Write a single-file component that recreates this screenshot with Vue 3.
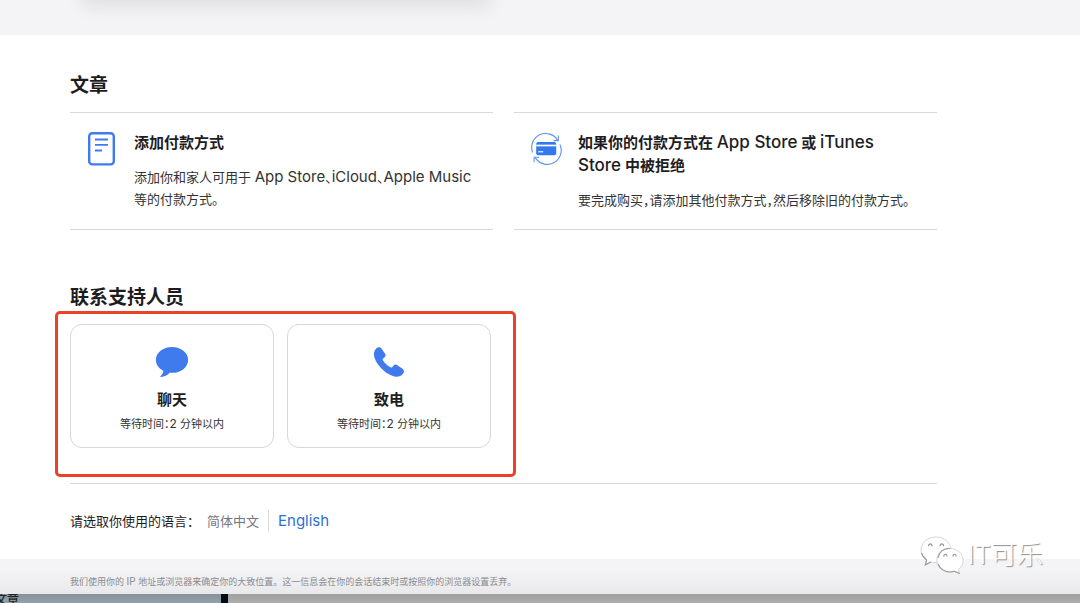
<script setup>
const contacts = [
  { id: 'chat', title: '聊天', wait: '等待时间：', count: '2', rest: ' 分钟以内' },
  { id: 'call', title: '致电', wait: '等待时间：', count: '2', rest: ' 分钟以内' }
]
</script>

<template>
  <div class="page">
    <header class="hero"><div class="hero-card"></div></header>

    <main class="main">
      <section>
        <h2 class="section-title">文章</h2>
        <div class="articles">
          <article class="article">
            <svg class="article-icon" viewBox="0 0 34 36" fill="none" stroke="#407bee" aria-hidden="true">
              <rect x="4.200" y="2.200" width="24.600" height="31.200" rx="3.200" stroke-width="2.400" />
              <path d="M10 8.500h13M10 13.900h13M10 19.500h7" stroke-width="1.800" />
            </svg>
            <div>
              <h3 class="article-title">添加付款方式</h3>
              <p class="article-text">添加你和家人可用于 <span class="latin">App Store</span>、<span class="latin">iCloud</span>、<span class="latin">Apple Music</span> 等的付款方式。</p>
            </div>
          </article>
          <article class="article">
            <svg class="article-icon" viewBox="0 0 34 36" fill="none" stroke="#5c94f1" stroke-width="1.100" aria-hidden="true">
              <path d="M3.600 21.500A14 14 0 0 1 28.800 9.500M30.900 13.500A14 14 0 0 1 6.200 26.600" />
              <path d="M29.300 4.600v5h-5M5.100 31.200v-5h5" />
              <rect x="7.200" y="11" width="20" height="13.200" rx="2" fill="#3478f0" stroke="none" />
              <path d="M7.200 14.500h20" stroke="#fff" stroke-width="1.700" />
              <path d="M9.200 20.800h5" stroke="#fff" stroke-width="1.100" />
            </svg>
            <div>
              <h3 class="article-title">如果你的付款方式在 <span class="latin">App Store</span> 或 <span class="latin">iTunes Store</span> 中被拒绝</h3>
              <p class="article-text">要完成购买，请添加其他付款方式，然后移除旧的付款方式。</p>
            </div>
          </article>
        </div>
      </section>

      <section class="support">
        <h2 class="section-title">联系支持人员</h2>
        <div class="contacts">
          <button v-for="c in contacts" :key="c.id" class="contact" type="button">
            <svg v-if="c.id === 'chat'" class="contact-icon" viewBox="0 0 34 32" fill="#407bee" aria-hidden="true">
              <path d="M17 1C8 1 .9 6.700.9 13.900c0 4.500 2.900 8.500 7.400 10.800.1 2.100-1.200 4-2.700 5.200-.5.500-.2 1 .4 1 3.300-.1 6.600-1.800 8.600-4.200.8.100 1.600.1 2.400.1 9 0 16.100-5.700 16.100-12.900S26 1 17 1z" />
            </svg>
            <svg v-else class="contact-icon" viewBox="0 0 34 32" fill="#407bee" aria-hidden="true">
              <path d="M4.200 2.400C5.700.8 8.200.6 9.500 2.500l3.600 5.300c.9 1.500.5 2.600-.8 3.700l-1.200 1c-.5.500-.6 1-.2 1.700 1.900 3 4.500 5.400 7.600 7 .7.400 1.300.3 1.800-.3l1-1.200c1-1.200 2.300-1.500 3.700-.6l5.600 3.600c1.900 1.300 1.700 3.700.2 5.300-2.500 2.900-6.300 3.400-10.700 1.700C12 26.800 5 19 2.500 11.800 1.400 8 1.700 4.700 4.200 2.400z" />
            </svg>
            <span class="contact-title">{{ c.title }}</span>
            <span class="contact-wait">{{ c.wait }}<span class="latin">{{ c.count }}</span>{{ c.rest }}</span>
          </button>
          <div class="highlight"></div>
        </div>
      </section>

      <nav class="languages" aria-label="语言">
        <span class="language-label">请选取你使用的语言：</span>
        <span class="language-current">简体中文</span>
        <a class="language-link" href="#" lang="en">English</a>
      </nav>
    </main>

    <footer class="footer">我们使用你的 <span class="latin">IP</span> 地址或浏览器来确定你的大致位置。这一信息会在你的会话结束时或按照你的浏览器设置丢弃。</footer>

    <div class="backdrop">
      <div class="backdrop-window">文章</div>
      <div class="backdrop-rest"></div>
    </div>

    <div class="watermark">
      <svg class="watermark-icon" viewBox="0 0 44 38" aria-hidden="true">
        <g fill="#fff" stroke="#c4c4c4" stroke-width="0.700">
          <path d="M16 1C7.700 1 1 6.700 1 14c0 4.200 2.200 7.700 5.600 10l-1.300 5 5.500-3c1.600.5 3.300.7 5.200.7 8.300 0 15-5.600 15-12.700S24.300 1 16 1z" />
          <path d="M30 12.500c-7.300 0-13.200 5.200-13.200 11.700S22.700 36 30 36c1.700 0 3.200-.2 4.600-.7l5 2.300-1.300-4c3-2.200 4.800-5.500 4.800-9.300 0-6.500-5.800-11.800-13.100-11.800z" />
        </g>
        <path d="M8.500 10.200c0-3.200 3.600-3.200 3.600 0M20 10.200c0-3.200 3.600-3.200 3.600 0M23.800 20.500c0-3 3.200-3 3.200 0M33 20.500c0-3 3.200-3 3.200 0" fill="none" stroke="#999" stroke-width="1.200" />
        <path d="M18 22C19 16 23.500 12.500 30 12.200M18 28C20 33 25 36 30 36c1.700 0 3.200-.2 4.600-.7l5 2.300M1.500 17c.8 3 2.500 5.200 5.100 7l-1.300 5 5.500-3" fill="none" stroke="#999" stroke-width="1.100" />
      </svg>
      <span>IT可乐</span>
    </div>
  </div>
</template>

<style>
body { background: #fff; }
</style>

<style scoped>
.page {
  position: relative;
  display: flex;
  flex-direction: column;
  height: 100vh;
  overflow: hidden;
  color: #1d1d1f;
  font-family: Inter, "Noto Sans CJK SC", sans-serif;
}
.hero {
  position: relative;
  flex: none;
  height: 35px;
  overflow: hidden;
  background: #f4f4f6;
}
.hero-card {
  position: absolute;
  top: -40px;
  left: 81px;
  width: 38%;
  height: 40px;
  background: #fff;
  box-shadow: 0 8px 18px rgba(0, 0, 0, 0.08);
}
.main {
  flex: none;
  padding: 37px 143px 0 70px;
}
.section-title {
  margin: 0;
  font-size: 19px;
  font-weight: 600;
  line-height: 28px;
}
.articles {
  display: grid;
  grid-template-columns: 1fr 1fr;
  column-gap: 21px;
  margin-top: 12px;
}
.article {
  display: flex;
  gap: 15px;
  padding: 18px 15px;
  border-top: 1px solid #d8d8d8;
  border-bottom: 1px solid #d8d8d8;
}
.article-icon {
  flex: none;
  width: 34px;
  height: 36px;
}
.article-title {
  margin: 0;
  padding-right: 15px;
  font-size: 15px;
  font-weight: 600;
  line-height: 23px;
}
.article-title .latin {
  font-size: 17px;
  font-weight: 500;
}
.article-text {
  margin: 12px 0 0;
  color: #333;
  font-size: 13px;
  line-height: 22px;
  font-feature-settings: "halt";
}
.article-text .latin { font-size: 15px; }
.support { margin-top: 54px; }
.contacts {
  position: relative;
  display: grid;
  grid-template-columns: repeat(2, minmax(0, 204px));
  gap: 13px;
  width: 421px;
  margin-top: 12px;
}
.contact {
  display: flex;
  flex-direction: column;
  align-items: center;
  height: 124px;
  padding: 21px 0 0;
  border: 1px solid #d8d8da;
  border-radius: 12px;
  background: #fff;
  color: inherit;
  font-family: inherit;
}
.contact-icon {
  width: 34px;
  height: 32px;
}
.contact-title {
  margin-top: 10px;
  font-size: 15px;
  font-weight: 600;
  line-height: 24px;
}
.contact-wait {
  margin-top: 3px;
  color: #333;
  font-size: 11px;
  line-height: 18px;
  font-feature-settings: "halt";
}
.contact-wait .latin { font-size: 12px; }
.highlight {
  position: absolute;
  inset: -13px -25px -29px -15px;
  border: 3px solid #eb4129;
  border-radius: 5px;
  pointer-events: none;
}
.languages {
  display: flex;
  align-items: center;
  margin-top: 35px;
  padding: 26px 0 27px;
  border-top: 1px solid #d8d8d8;
  font-size: 13px;
  line-height: 22px;
}
.language-label { margin-right: 7px; }
.language-current {
  padding-right: 9px;
  border-right: 1px solid #d8d8d8;
  color: #76767a;
}
.language-link {
  padding-left: 9px;
  color: #2f6fd3;
  font-size: 15px;
  text-decoration: none;
}
.footer {
  flex: none;
  padding: 14px 70px 4px;
  background: linear-gradient(#f4f4f6 30%, #e9e9eb);
  color: #8b8b8e;
  font-size: 9px;
  line-height: 16px;
}
.footer .latin { font-size: 10px; }
.backdrop {
  display: flex;
  flex: 1;
  min-height: 0;
  overflow: hidden;
}
.backdrop-window {
  width: 221px;
  border-right: 7px solid #020a16;
  background: linear-gradient(#85929b, #94a2ab);
  color: #202428;
  font-size: 12px;
  font-weight: 500;
  line-height: 12px;
  text-indent: -5px;
}
.backdrop-rest {
  flex: 1;
  background: linear-gradient(#a0a0a0, #adadad);
}
.watermark {
  position: absolute;
  right: 37px;
  bottom: 29px;
  display: flex;
  align-items: center;
  gap: 4px;
  color: #fff;
  font-size: 26px;
  font-weight: 300;
  line-height: 38px;
  text-shadow: 1px 1px 1px #888;
}
.watermark-icon {
  width: 44px;
  height: 38px;
}
</style>
